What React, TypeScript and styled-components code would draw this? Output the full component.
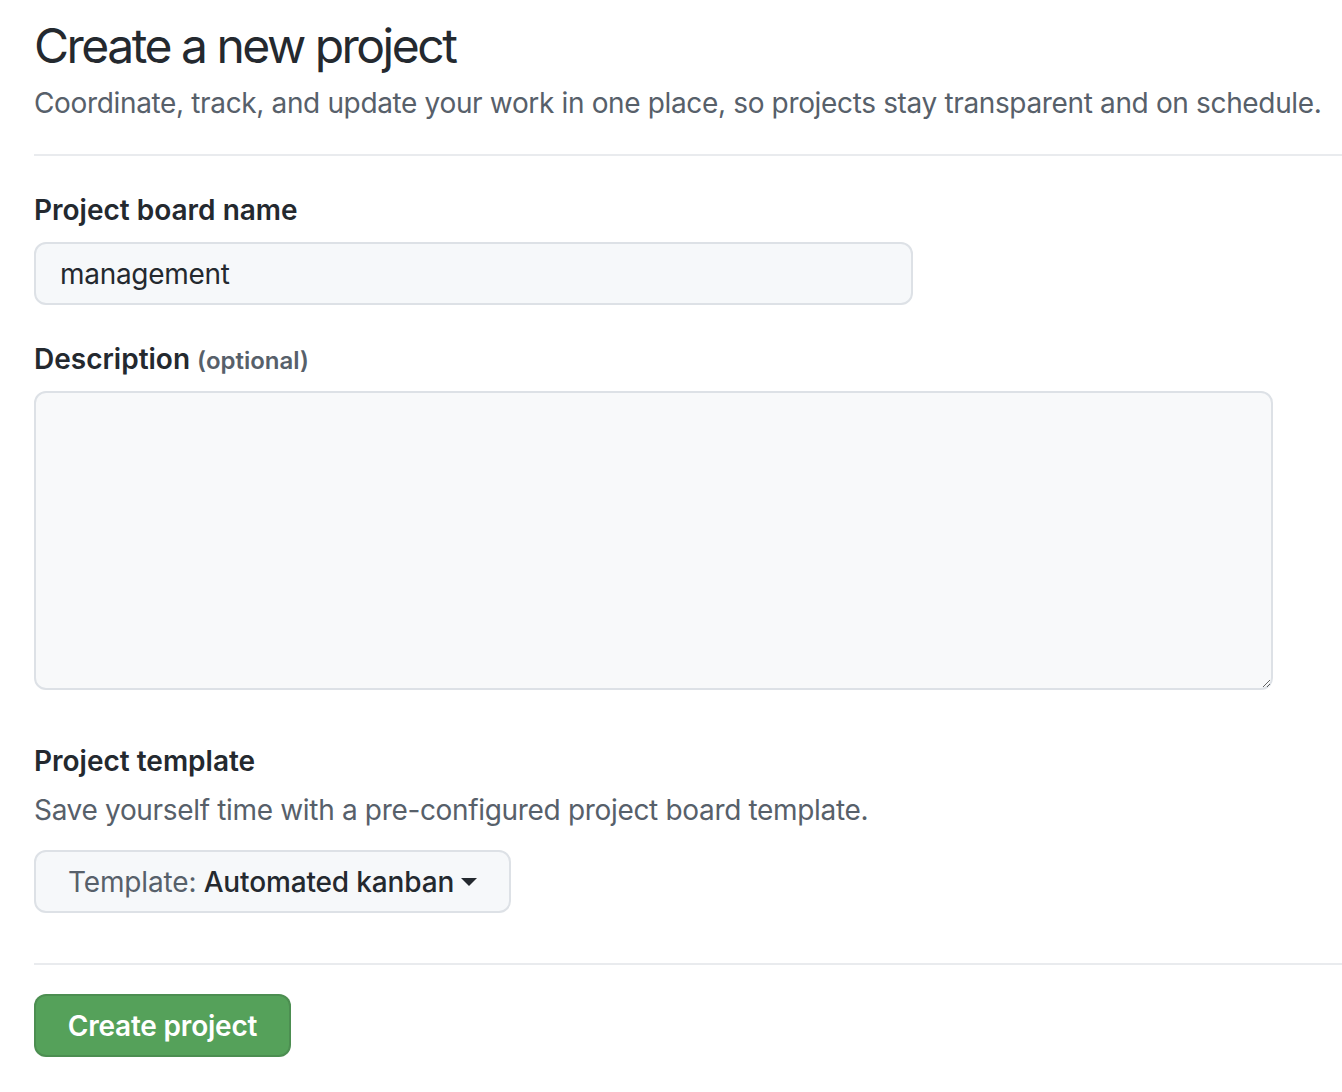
import React from "react";
import styled, { createGlobalStyle } from "styled-components";

const Global = createGlobalStyle`
  html, body { margin: 0; padding: 0; background: #ffffff; }
  body { font-family: Inter, "Noto Sans", "Liberation Sans", sans-serif; color: #24292f; }
  * { box-sizing: border-box; }
`;

const Page = styled.main`
  padding: 16px 0 0 34px;
  display: flex;
  flex-direction: column;
`;

const Title = styled.h1`
  margin: 0;
  font-size: 48px;
  line-height: 60px;
  font-weight: 400;
  letter-spacing: -2.5px;
  color: #24292f;
`;

const Lead = styled.p`
  margin: 6px 0 0;
  font-size: 28px;
  line-height: 42px;
  color: #57606a;
  letter-spacing: -0.35px;
  white-space: nowrap;
`;

const Divider = styled.hr<{ $top: number; $bottom: number }>`
  border: 0;
  height: 2px;
  background: #e9ebee;
  margin: ${(p) => p.$top}px 0 ${(p) => p.$bottom}px;
`;

const Group = styled.div<{ $gap?: number }>`
  display: flex;
  flex-direction: column;
  margin-top: ${(p) => p.$gap ?? 0}px;
`;

const Label = styled.label<{ $flush?: boolean }>`
  font-size: 28px;
  line-height: 42px;
  font-weight: 600;
  color: #24292f;
  margin-bottom: ${(p) => (p.$flush ? 0 : 11)}px;
`;

const Optional = styled.span`
  font-size: 24px;
  line-height: 1;
  color: #57606a;
  font-weight: 600;
`;

const TextInput = styled.input`
  width: 879px;
  height: 63px;
  padding: 0 24px;
  font-family: inherit;
  font-size: 28px;
  letter-spacing: -0.3px;
  color: #24292f;
  background: #f6f8fa;
  border: 2px solid #dde1e6;
  border-radius: 12px;
  outline: none;
`;

const TextArea = styled.textarea`
  width: 1239px;
  height: 299px;
  padding: 16px 24px;
  font-family: inherit;
  font-size: 28px;
  color: #24292f;
  background: #f8f9fa;
  border: 2px solid #dde1e6;
  border-radius: 12px;
  outline: none;
  resize: vertical;
`;

const Note = styled.p`
  margin: 7px 0 19px;
  font-size: 28px;
  line-height: 42px;
  letter-spacing: -0.33px;
  color: #57606a;
`;

const SelectButton = styled.button`
  align-self: flex-start;
  width: 477px;
  height: 63px;
  padding: 0 30px 0 32px;
  display: flex;
  align-items: center;
  justify-content: flex-start;
  gap: 7px;
  white-space: nowrap;
  font-family: inherit;
  font-size: 28px;
  font-weight: 500;
  letter-spacing: -0.15px;
  color: #24292f;
  background: #f6f8fa;
  border: 2px solid #dde1e6;
  border-radius: 12px;
  cursor: pointer;
`;

const Caret = styled.svg`
  flex-shrink: 0;
  width: 16px;
  height: 10px;
`;

const Muted = styled.span`
  color: #57606a;
  font-weight: 400;
`;

const PrimaryButton = styled.button`
  align-self: flex-start;
  width: 257px;
  height: 63px;
  padding: 0;
  font-family: inherit;
  font-size: 28px;
  font-weight: 600;
  letter-spacing: -0.2px;
  color: #ffffff;
  background: #55a15a;
  border: 2px solid rgba(27, 31, 36, 0.15);
  border-radius: 12px;
  cursor: pointer;
`;

export default function App() {
  return (
    <>
      <Global />
      <Page>
        <Title>Create a new project</Title>
        <Lead>
          Coordinate, track, and update your work in one place, so projects stay transparent and on schedule.
        </Lead>
        <Divider $top={30} $bottom={33} />
        <Group>
          <Label htmlFor="name">Project board name</Label>
          <TextInput id="name" defaultValue="management" />
        </Group>
        <Group $gap={33}>
          <Label htmlFor="desc">
            Description <Optional>(optional)</Optional>
          </Label>
          <TextArea id="desc" />
        </Group>
        <Group $gap={50}>
          <Label as="div" $flush>Project template</Label>
          <Note>Save yourself time with a pre-configured project board template.</Note>
          <SelectButton type="button">
            <span>
              <Muted>Template:</Muted> Automated kanban
            </span>
            <Caret viewBox="0 0 16 10" aria-hidden="true">
              <path d="M0 1h16L8 9z" fill="#24292f" />
            </Caret>
          </SelectButton>
        </Group>
        <Divider $top={50} $bottom={29} />
        <PrimaryButton type="button">Create project</PrimaryButton>
      </Page>
    </>
  );
}
